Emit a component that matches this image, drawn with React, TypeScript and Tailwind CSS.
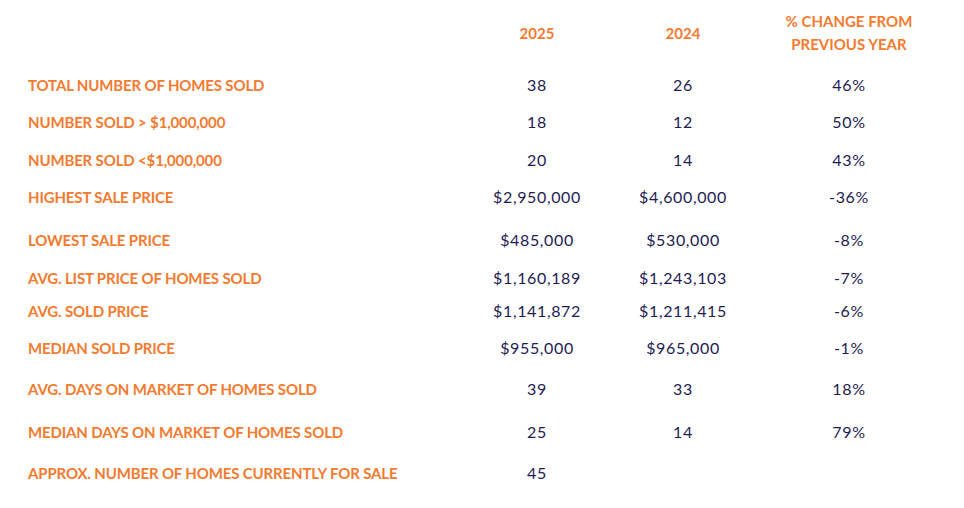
const rows = [
  { label: 'TOTAL NUMBER OF HOMES SOLD', a: '38', b: '26', c: '46%', h: 'h-[38px]' },
  { label: 'NUMBER SOLD > $1,000,000', a: '18', b: '12', c: '50%', h: 'h-[36px]' },
  { label: 'NUMBER SOLD <$1,000,000', a: '20', b: '14', c: '43%', h: 'h-[40px]' },
  { label: 'HIGHEST SALE PRICE', a: '$2,950,000', b: '$4,600,000', c: '-36%', h: 'h-[34px]' },
  { label: 'LOWEST SALE PRICE', a: '$485,000', b: '$530,000', c: '-8%', h: 'h-[52px]' },
  { label: 'AVG. LIST PRICE OF HOMES SOLD', a: '$1,160,189', b: '$1,243,103', c: '-7%', h: 'h-[22px]' },
  { label: 'AVG. SOLD PRICE', a: '$1,141,872', b: '$1,211,415', c: '-6%', h: 'h-[46px]' },
  { label: 'MEDIAN SOLD PRICE', a: '$955,000', b: '$965,000', c: '-1%', h: 'h-[28px]' },
  { label: 'AVG. DAYS ON MARKET OF HOMES SOLD', a: '39', b: '33', c: '18%', h: 'h-[54px]' },
  { label: 'MEDIAN DAYS ON MARKET OF HOMES SOLD', a: '25', b: '14', c: '79%', h: 'h-[32px]' },
  { label: 'APPROX. NUMBER OF HOMES CURRENTLY FOR SALE', a: '45', b: '', c: '', h: 'h-[50px]' },
]

const grid = 'grid grid-cols-[437px_144px_148px_184px] items-center'

export default function App() {
  return (
    <div className="w-[964px] h-[508px] bg-white pl-[28px] font-['Lato',sans-serif]">
      <div className={`${grid} h-[66px] text-[15px] font-bold text-[#f37a2f] leading-[23px]`}>
        <div />
        <div className="text-center">2025</div>
        <div className="text-center">2024</div>
        <div className="text-center">
          % CHANGE FROM
          <br />
          PREVIOUS YEAR
        </div>
      </div>
      {rows.map((r) => (
        <div key={r.label} className={`${grid} ${r.h}`}>
          <div className="text-[15px] font-bold text-[#f37a2f] tracking-[-0.01em]">{r.label}</div>
          <div className="text-center text-[16px] tracking-[0.04em] text-[#1e1c52]">{r.a}</div>
          <div className="text-center text-[16px] tracking-[0.04em] text-[#1e1c52]">{r.b}</div>
          <div className="text-center text-[16px] tracking-[0.04em] text-[#1e1c52]">{r.c}</div>
        </div>
      ))}
    </div>
  )
}
